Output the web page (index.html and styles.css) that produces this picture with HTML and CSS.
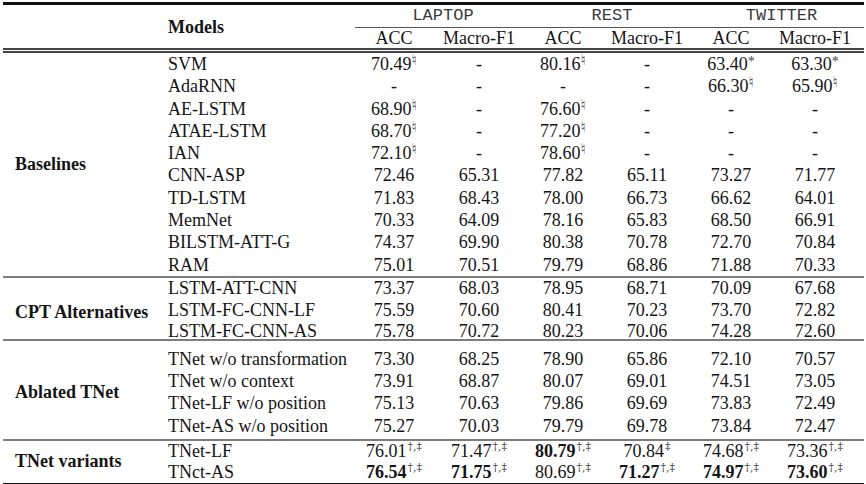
FILE: index.html
```html
<!DOCTYPE html>
<html>
<head>
<meta charset="utf-8">
<link rel="stylesheet" href="styles.css">
</head>
<body>
<table class="results">
  <colgroup>
    <col class="c-group">
    <col class="c-name">
    <col class="c-acc1">
    <col class="c-mf">
    <col class="c-acc">
    <col class="c-mf">
    <col class="c-acc">
    <col class="c-mf-last">
  </colgroup>
  <thead>
    <tr class="h1">
      <th rowspan="2" class="top"></th>
      <th rowspan="2" class="top name-h">Models</th>
      <th colspan="2" class="top ds">LAPTOP</th>
      <th colspan="2" class="top ds">REST</th>
      <th colspan="2" class="top ds">TWITTER</th>
    </tr>
    <tr class="h2">
      <th>ACC</th><th>Macro-F1</th>
      <th>ACC</th><th>Macro-F1</th>
      <th>ACC</th><th class="last">Macro-F1</th>
    </tr>
  </thead>
  <tbody class="sec1">
    <tr class="first">
      <td rowspan="10" class="group">Baselines</td>
      <td class="name">SVM</td>
      <td>70.49<sup class="s nat">♮</sup></td><td>-</td><td>80.16<sup class="s nat">♮</sup></td><td>-</td><td>63.40<sup class="s ast">*</sup></td><td class="last">63.30<sup class="s ast">*</sup></td>
    </tr>
    <tr><td class="name">AdaRNN</td><td>-</td><td>-</td><td>-</td><td>-</td><td>66.30<sup class="s nat">♮</sup></td><td class="last">65.90<sup class="s nat">♮</sup></td></tr>
    <tr><td class="name">AE-LSTM</td><td>68.90<sup class="s nat">♮</sup></td><td>-</td><td>76.60<sup class="s nat">♮</sup></td><td>-</td><td>-</td><td class="last">-</td></tr>
    <tr><td class="name">ATAE-LSTM</td><td>68.70<sup class="s nat">♮</sup></td><td>-</td><td>77.20<sup class="s nat">♮</sup></td><td>-</td><td>-</td><td class="last">-</td></tr>
    <tr><td class="name">IAN</td><td>72.10<sup class="s nat">♮</sup></td><td>-</td><td>78.60<sup class="s nat">♮</sup></td><td>-</td><td>-</td><td class="last">-</td></tr>
    <tr><td class="name">CNN-ASP</td><td>72.46</td><td>65.31</td><td>77.82</td><td>65.11</td><td>73.27</td><td class="last">71.77</td></tr>
    <tr><td class="name">TD-LSTM</td><td>71.83</td><td>68.43</td><td>78.00</td><td>66.73</td><td>66.62</td><td class="last">64.01</td></tr>
    <tr><td class="name">MemNet</td><td>70.33</td><td>64.09</td><td>78.16</td><td>65.83</td><td>68.50</td><td class="last">66.91</td></tr>
    <tr><td class="name">BILSTM-ATT-G</td><td>74.37</td><td>69.90</td><td>80.38</td><td>70.78</td><td>72.70</td><td class="last">70.84</td></tr>
    <tr><td class="name">RAM</td><td>75.01</td><td>70.51</td><td>79.79</td><td>68.86</td><td>71.88</td><td class="last">70.33</td></tr>
  </tbody>
  <tbody class="sec2">
    <tr class="first r1">
      <td rowspan="3" class="group g2">CPT Alternatives</td>
      <td class="name">LSTM-ATT-CNN</td><td>73.37</td><td>68.03</td><td>78.95</td><td>68.71</td><td>70.09</td><td class="last">67.68</td>
    </tr>
    <tr class="r2"><td class="name">LSTM-FC-CNN-LF</td><td>75.59</td><td>70.60</td><td>80.41</td><td>70.23</td><td>73.70</td><td class="last">72.82</td></tr>
    <tr class="r3"><td class="name">LSTM-FC-CNN-AS</td><td>75.78</td><td>70.72</td><td>80.23</td><td>70.06</td><td>74.28</td><td class="last">72.60</td></tr>
  </tbody>
  <tbody class="sec3">
    <tr class="first r1">
      <td rowspan="4" class="group g3">Ablated TNet</td>
      <td class="name">TNet w/o transformation</td><td>73.30</td><td>68.25</td><td>78.90</td><td>65.86</td><td>72.10</td><td class="last">70.57</td>
    </tr>
    <tr class="r2"><td class="name">TNet w/o context</td><td>73.91</td><td>68.87</td><td>80.07</td><td>69.01</td><td>74.51</td><td class="last">73.05</td></tr>
    <tr class="r3"><td class="name">TNet-LF w/o position</td><td>75.13</td><td>70.63</td><td>79.86</td><td>69.69</td><td>73.83</td><td class="last">72.49</td></tr>
    <tr class="r4"><td class="name">TNet-AS w/o position</td><td>75.27</td><td>70.03</td><td>79.79</td><td>69.78</td><td>73.84</td><td class="last">72.47</td></tr>
  </tbody>
  <tbody class="sec4">
    <tr class="first r1">
      <td rowspan="2" class="group g4">TNet variants</td>
      <td class="name">TNet-LF</td>
      <td>76.01<sup class="s">†,‡</sup></td>
      <td>71.47<sup class="s">†,‡</sup></td>
      <td><b>80.79</b><sup class="s">†,‡</sup></td>
      <td>70.84<sup class="s">‡</sup></td>
      <td>74.68<sup class="s">†,‡</sup></td>
      <td class="last">73.36<sup class="s">†,‡</sup></td>
    </tr>
    <tr class="r2">
      <td class="name">TNct-AS</td>
      <td><b>76.54</b><sup class="s">†,‡</sup></td>
      <td><b>71.75</b><sup class="s">†,‡</sup></td>
      <td>80.69<sup class="s">†,‡</sup></td>
      <td><b>71.27</b><sup class="s">†,‡</sup></td>
      <td><b>74.97</b><sup class="s">†,‡</sup></td>
      <td class="last"><b>73.60</b><sup class="s">†,‡</sup></td>
    </tr>
  </tbody>
</table>
</body>
</html>
```

FILE: styles.css
```css
html, body {
  margin: 0;
  padding: 0;
  background: #ffffff;
}

.results {
  border-collapse: collapse;
  table-layout: fixed;
  width: 861px;
  margin: 2px 0 0 3px;
  font-family: "Liberation Serif", "Times New Roman", serif;
  font-size: 18px;
  color: #151515;
}

.c-group { width: 157px; }
.c-name { width: 195px; }
.c-acc1 { width: 78px; }
.c-acc { width: 76px; }
.c-mf { width: 92px; }
.c-mf-last { width: 95px; }

.results th,
.results td {
  padding: 0;
  line-height: 22px;
  text-align: center;
  white-space: nowrap;
  font-weight: normal;
  vertical-align: middle;
}

.results td.last,
.results th.last {
  padding-right: 3px;
}

/* header */
.h1 th { height: 22px; }
.h1 th.top { border-top: 3px solid #111; }
.h1 th.ds {
  border-bottom: 1px solid #555;
  font-family: "Liberation Mono", "Courier New", monospace;
  font-size: 17px;
  color: #3a3a3a;
  padding-left: 6px;
}
.results th.name-h {
  text-align: left;
  padding-left: 8px;
  font-weight: bold;
  border-bottom: 5px double #444;
}
.h2 th {
  height: 20px;
  line-height: 20px;
  border-bottom: 5px double #444;
}
.h1 th:first-child { border-bottom: 5px double #444; }

/* body */
.results td.name {
  text-align: left;
  padding-left: 8px;
}
.results td.group {
  text-align: left;
  padding-left: 12px;
  font-weight: bold;
}

.sec1 td { line-height: 22.3px; height: 22.3px; }

tbody .first td { border-top: 2px solid #7d7d7d; }
.sec1 .first td { border-top: none; }

.sec2 .r1 td { height: 21px; line-height: 21px; }
.sec2 .r2 td { height: 23px; line-height: 23px; }
.sec2 .r3 td { height: 15px; line-height: 15px; padding-top: 2px; }
.results .sec2 td.g2 { padding-top: 8px; line-height: 22px; }

.sec3 .r1 td { height: 22px; padding-top: 7px; }
.sec3 .r2 td { height: 22px; }
.sec3 .r3 td { height: 23px; line-height: 23px; }
.sec3 .r4 td { height: 22px; padding-bottom: 2px; }
.results .sec3 td.g3 { padding-top: 4px; padding-bottom: 0; }

.sec4 td { height: 21px; line-height: 21px; }
.sec4 .r2 td { border-bottom: 3px solid #111; }
.results .sec4 td.g4 { border-bottom: 3px solid #111; }

.s {
  font-family: "DejaVu Serif", "Liberation Serif", serif;
  font-size: 11px;
  line-height: 0;
  vertical-align: 7px;
  color: #444;
  margin-left: 1px;
}
.nat {
  font-family: "DejaVu Sans", sans-serif;
  font-size: 15px;
  vertical-align: 5px;
  margin-left: 0;
}
.ast {
  font-family: "Liberation Serif", serif;
  font-size: 14px;
  vertical-align: 4px;
  margin-left: 0;
}
.results b { font-weight: bold; }
```
